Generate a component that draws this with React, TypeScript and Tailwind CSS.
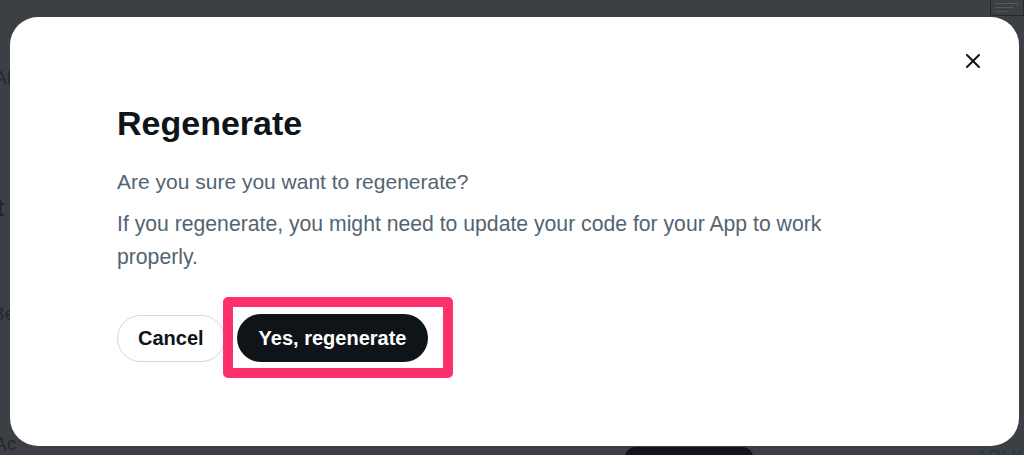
import React from "react";

export default function App() {
  const font = { fontFamily: '"Liberation Sans", Arial, sans-serif' };
  return (
    <div
      className="relative w-[1024px] h-[455px] overflow-hidden bg-[#3c3f44] pt-[17px] pl-[10px]"
      style={font}
    >
      {/* faint background page hints behind the dialog */}
      <div className="absolute left-[-6px] top-[64px] text-[19px] text-[#25282c]">AP</div>
      <div className="absolute left-[-4px] top-[190px] text-[24px] font-bold text-[#202326]">t</div>
      <div className="absolute left-[-8px] top-[300px] text-[19px] text-[#25282c]">Be</div>
      <div className="absolute left-[-6px] top-[430px] text-[19px] text-[#25282c]">Ac</div>
      <div className="absolute left-[990px] top-[-10px] w-[34px] h-[26px] border border-[#24272b] px-[4px] pt-[12px] flex flex-col gap-[3px]">
        <div className="h-[1px] bg-[#55585d]" />
        <div className="h-[1px] bg-[#55585d] w-[80%]" />
        <div className="h-[1px] bg-[#55585d] w-[60%]" />
      </div>
      <div className="absolute left-[625px] top-[447px] w-[128px] h-[20px] rounded-t-[10px] bg-[#111418]" />
      <div className="absolute left-[976px] top-[444px] text-[18px] text-[#1e3a5c] tracking-wide">APLK</div>

      <div className="relative w-[1009px] h-[429px] rounded-[28px] bg-white pl-[107px] pt-[86px]">
        <button className="absolute right-[32px] top-[30px] w-[28px] h-[28px] flex items-center justify-center">
          <svg width="14" height="14" viewBox="0 0 14 14" fill="none">
            <path d="M1 1L13 13M13 1L1 13" stroke="#0f1419" strokeWidth="2" strokeLinecap="round" />
          </svg>
        </button>

        <h1 className="text-[34px] leading-[41px] font-bold text-[#0f1419]">Regenerate</h1>
        <p className="mt-[21px] text-[21px] leading-[33px] text-[#536471]">
          Are you sure you want to regenerate?
        </p>
        <p className="mt-[9px] w-[730px] text-[21.2px] leading-[33px] text-[#536471]">
          If you regenerate, you might need to update your code for your App to work properly.
        </p>

        <div className="mt-[41px] flex items-center gap-[12px]">
          <button className="h-[47px] px-[20px] rounded-full border border-[#cfd9de] bg-white text-[20px] font-bold text-[#0f1419]">
            Cancel
          </button>
          <div className="relative">
            <button className="h-[48px] px-[22px] rounded-full bg-[#0f1419] text-[20px] font-bold text-white">
              Yes, regenerate
            </button>
            <div className="absolute left-[-14px] top-[-17px] w-[230px] h-[81px] border-[10px] border-[#fe2f6d] rounded-[5px] pointer-events-none" />
          </div>
        </div>
      </div>
    </div>
  );
}
